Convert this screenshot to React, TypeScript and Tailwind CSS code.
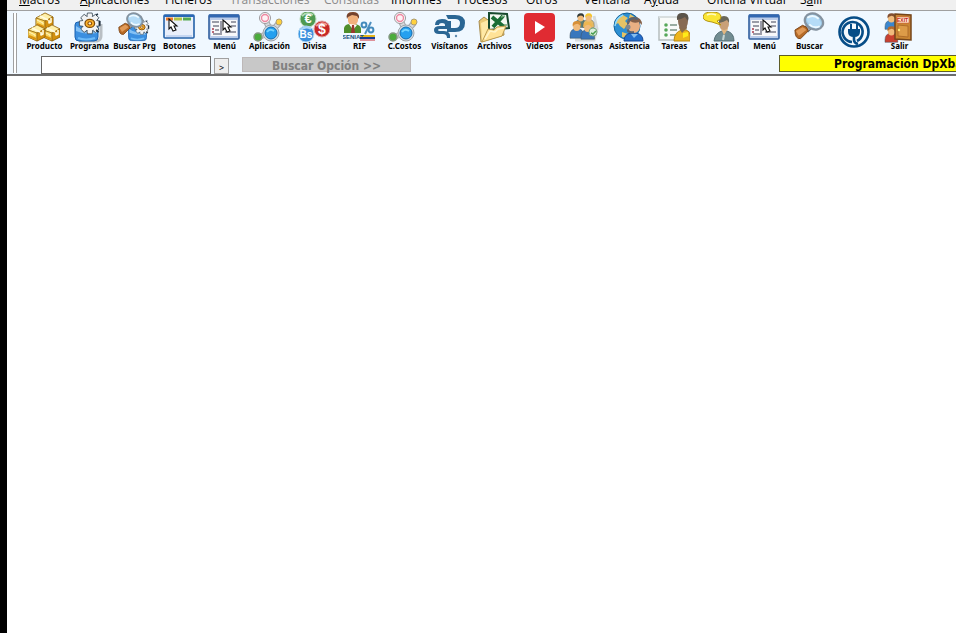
import type { ReactNode } from 'react';

type MenuItem = { label: string; hotkey?: number; width: string; disabled?: boolean };

const menuItems: MenuItem[] = [
  { label: 'Macros', hotkey: 0, width: 'w-[61px]' },
  { label: 'Aplicaciones', hotkey: 0, width: 'w-[85px]' },
  { label: 'Ficheros', width: 'w-[65px]' },
  { label: 'Transacciones', width: 'w-[94px]', disabled: true },
  { label: 'Consultas', width: 'w-[67px]', disabled: true },
  { label: 'Informes', width: 'w-[66px]' },
  { label: 'Procesos', width: 'w-[69px]' },
  { label: 'Otros', width: 'w-[58px]' },
  { label: 'Ventana', width: 'w-[60px]' },
  { label: 'Ayuda', hotkey: 1, width: 'w-[63px]' },
  { label: 'Oficina Virtual', width: 'w-[93px]' },
  { label: 'Salir', hotkey: 1, width: 'w-[40px]' },
];

function Icon({ children }: { children: ReactNode }) {
  return (
    <svg className="mr-px h-8 w-8 shrink-0" viewBox="0 0 32 32" fill="none" aria-hidden="true">
      {children}
    </svg>
  );
}

function Box({ x, y }: { x: number; y: number }) {
  return (
    <g transform={`translate(${x} ${y})`} stroke="#8a5a08" strokeWidth=".6" strokeLinejoin="round">
      <path d="M0 5 9 0l8 4v8l-8 4-9-4Z" fill="#e7ae2e" />
      <path d="m0 5 9-5 8 4-8 4Z" fill="#fff0a8" />
      <path d="M0 5v7l9 4V8Z" fill="#f8d560" />
      <path d="M9 8v8l8-4V4Z" fill="#d3900f" />
      <path d="m4 3 8 4M13 7v3l2-1V5" stroke="#fffbe0" strokeWidth="1.6" />
      <path d="m1 11 7 3" stroke="#dc930e" strokeWidth="2" />
      <path d="m1 7 6 3v1" stroke="#fff6c6" strokeWidth="1" />
    </g>
  );
}

function ProductIcon() {
  return (
    <Icon>
      <Box x={8} y={1} />
      <Box x={15} y={13} />
      <Box x={0} y={13} />
    </Icon>
  );
}

const gearTeeth = [0, 45, 90, 135, 180, 225, 270, 315];

function Gear() {
  return (
    <g>
      <g fill="#f1f3f5" stroke="#33424f" strokeWidth="1">
        {gearTeeth.map((angle) => (
          <path d="m12 7 1-7h6l1 7Z" transform={`rotate(${angle} 16 13)`} key={angle} />
        ))}
      </g>
      <circle cx="16" cy="13" r="9" fill="#f1f3f5" />
      <path d="m24 3 2-2M28 10v6M24 21l3 3" stroke="#1c2c3a" strokeWidth="2" />
      <ellipse cx="16" cy="13" rx="6" ry="5" fill="#ffb32b" stroke="#7e4c0b" strokeWidth="1.6" />
      <ellipse cx="16" cy="13" rx="2.4" ry="2" fill="#fff4d2" stroke="#8c4d04" strokeWidth="1.4" />
    </g>
  );
}

function BlueBin() {
  return (
    <g>
      <path d="M2 13q0-3 3-3h17q3 0 3 3v12q0 4-4 4H6q-4 0-4-4Z" fill="#3b8fe0" stroke="#1a62b0" />
      <path d="M3 14q10 7 21 4v3Q12 23 3 19Z" fill="#84c1f5" />
      <path d="M5 26q8 3 17 0" stroke="#6cbaf8" strokeWidth="2" />
    </g>
  );
}

function ProgramIcon() {
  return (
    <Icon>
      <path d="M6 29h18q4-1 4-5V12" stroke="#b9bfc4" strokeWidth="3" />
      <BlueBin />
      <g transform="translate(4 1) scale(.8)"><Gear /></g>
    </Icon>
  );
}

function Magnifier() {
  return (
    <g>
      <path d="m13 14 5 4-3 3-5-4Z" fill="#9a9fa4" stroke="#525c65" />
      <path d="m1 19 8-5q5 1 6 6l-8 8q-6 1-6-9Z" fill="#b66b27" stroke="#7c4518" />
      <path d="m2 20 7-4q3 1 4 3l-8 6Z" fill="#e09a58" />
      <ellipse cx="21" cy="10" rx="10" ry="8" transform="rotate(27 21 10)" fill="#9fcbe9" stroke="#8593a0" strokeWidth="2.4" />
      <ellipse cx="21" cy="10" rx="8" ry="5" transform="rotate(27 21 10)" fill="#b5dcf7" />
      <path d="M14 6q6-4 12 1M16 13q5 5 11 2" stroke="#edf9ff" strokeWidth="2" />
    </g>
  );
}

function SearchProgramIcon() {
  return (
    <Icon>
      <g transform="translate(9 6) scale(.78)"><BlueBin /></g>
      <g transform="translate(15 8) scale(.55)"><Gear /></g>
      <g transform="scale(.8)"><Magnifier /></g>
    </Icon>
  );
}

function SearchIcon() {
  return <Icon><g transform="translate(1 0) scale(.95)"><Magnifier /></g></Icon>;
}

function Cursor({ x, y }: { x: number; y: number }) {
  return (
    <path transform={`translate(${x} ${y})`} d="M0 0v10l2-2 2 4 3-1-2-4h3Z" fill="#fff" stroke="#111" strokeWidth="1.1" />
  );
}

function ButtonsIcon() {
  return (
    <Icon>
      <rect x="1" y="3" width="30" height="23" rx="1" fill="#e9effb" stroke="#2461a9" strokeWidth="1.6" />
      <path d="M1 4h30" stroke="#2867b6" strokeWidth="2" />
      <path d="M3 7h7" stroke="#ec7724" strokeWidth="3" />
      <path d="M11 7h8" stroke="#b2c344" strokeWidth="3" />
      <path d="M20 7h8" stroke="#55a94e" strokeWidth="3" />
      <path d="M3 24h26" stroke="#c5d6f2" strokeWidth="2" />
      <Cursor x={6} y={7} />
    </Icon>
  );
}

function MenuIcon() {
  return (
    <Icon>
      <rect x="1" y="3" width="30" height="24" rx="1" fill="#bccdea" stroke="#315f9f" strokeWidth="1.6" />
      <path d="M1 4h30" stroke="#3167b1" strokeWidth="3" />
      <path d="M3 8h26v16H3Z" fill="#f8f8fa" />
      <path d="M4 10h7M5 14h6M7 18h4M5 22h8M13 9v14M15 10h3M17 20h11M23 10h5M23 14h5M15 16h3" stroke="#9b9ca8" strokeWidth="2" />
      <path d="M4 17h2M4 20h2" stroke="#bc6877" strokeWidth="2" />
      <Cursor x={15} y={8} />
    </Icon>
  );
}

function MoleculeIcon() {
  return (
    <Icon>
      <path d="m12 7 6 13 8-9M18 21 5 25" stroke="#a5a8ac" strokeWidth="6" />
      <path d="m12 7 6 13 8-9M18 21 5 25" stroke="#d5d8dc" strokeWidth="4" />
      <circle cx="12" cy="6" r="5.5" fill="#fff" stroke="#9b989b" />
      <circle cx="12" cy="6" r="3.5" fill="#fff1f4" stroke="#ed89a2" strokeWidth="1.4" />
      <circle cx="26" cy="10" r="3" fill="#ffd13d" stroke="#ac9d74" />
      <circle cx="5" cy="25" r="4" fill="#4aac3c" stroke="#82977f" strokeWidth="1.5" />
      <circle cx="18" cy="21" r="8" fill="#d4dce3" stroke="#9fa6ab" />
      <circle cx="18" cy="21" r="6" fill="#25a0ef" stroke="#146fb1" />
      <path d="M14 20q3-4 7-1" stroke="#74d4ff" strokeWidth="2" />
    </Icon>
  );
}

function CurrencyIcon() {
  return (
    <Icon>
      <circle cx="10" cy="7" r="8" fill="#4e9a51" stroke="#bddbbe" />
      <path d="M4 4q5-5 11-1" stroke="#b4d9b6" strokeWidth="2" />
      <circle cx="8" cy="22" r="8" fill="#3c90dd" stroke="#b7d9f1" />
      <path d="M2 19q5-6 11-2" stroke="#a9d4f6" strokeWidth="2" />
      <circle cx="24" cy="17" r="8" fill="#c62827" stroke="#e3aaa9" />
      <path d="M18 14q6-5 11-1" stroke="#ee9a94" strokeWidth="2" />
      <g fill="#fff" fontFamily="Liberation Sans" fontWeight="700" textAnchor="middle">
        <text x="10" y="11" fontSize="13">€</text>
        <text x="8" y="26" fontSize="10">Bs</text>
        <text x="24" y="22" fontSize="14">$</text>
      </g>
    </Icon>
  );
}

function RifIcon() {
  return (
    <Icon>
      <path d="M1 21v-5q1-4 6-4h5q6 1 6 5v4Z" fill="#4e8e2b" />
      <path d="M5 3q-1-3 5-3 5 0 5 4v5q-2 5-5 5-4 0-5-5Z" fill="#f1b17c" />
      <path d="M4 7Q2 0 10 0q7 0 6 7l-2-3-5-1-4 2Z" fill="#75432e" />
      <path d="m6 12 4 6 4-5" fill="#fff" />
      <path d="m9 13-1 8h4l-1-8Z" fill="#9d372d" />
      <path d="m28 10-6 12" stroke="#4d8fc0" strokeWidth="2" />
      <circle cx="21" cy="13" r="2.4" stroke="#438abc" strokeWidth="2" />
      <circle cx="28" cy="18" r="2.4" stroke="#438abc" strokeWidth="2" />
      <path d="M17 24h15" stroke="#e3b51b" strokeWidth="2" />
      <path d="M17 26h15" stroke="#193d94" strokeWidth="2" />
      <path d="M17 28h15" stroke="#cc2d36" strokeWidth="1" />
      <text x="-1" y="27" fontFamily="Liberation Sans" fontWeight="700" fontSize="6" fill="#174f7a">SENIAT</text>
    </Icon>
  );
}

function LogoIcon() {
  return (
    <Icon>
      <path d="M13 3h9q10 0 10 8 0 9-10 9h-8V9h4v7h4q5 0 5-5 0-4-5-4h-7Z" fill="#2a6694" />
      <path d="M2 13q0-6 7-6 7 0 7 5v3h-4v-2q0-2-3-2-3 0-3 2Z" fill="#2a6694" />
      <path d="M15 14H7q-6 0-6 4t5 4h4q4 0 4 4h3q1-7-6-7H7q-2 0-2-1t2-1h8Z" fill="#2a6694" />
      <circle cx="23" cy="24" r="1.2" fill="#5d8bb0" />
    </Icon>
  );
}

function ArchiveIcon() {
  return (
    <Icon>
      <path d="M1 9 6 5l4 3 14-3 2 18L3 30Z" fill="#ecca76" stroke="#a88d50" />
      <path d="m3 11 7-3v18l-6 3Z" fill="#ffe9a6" />
      <path d="m11 1 18 1 2 14-20 2Z" fill="#f4f8f1" stroke="#17492d" strokeWidth="2" />
      <path d="m14 5 12 10M25 4 15 15" stroke="#1a6d35" strokeWidth="4" />
      <path d="m23 5 4-1M26 13h3" stroke="#70a879" strokeWidth="1.5" />
      <path d="m4 30 6-13 6 1 3-3 9-1-4 10Z" fill="#ffe297" stroke="#bd9c52" />
      <path d="m7 27 5-8 5 1 3-3 6-1" stroke="#fff5cc" strokeWidth="1.5" />
    </Icon>
  );
}

function VideoIcon() {
  return (
    <Icon>
      <rect x="1" y="1" width="31" height="29" rx="4" fill="#e02b32" />
      <path d="m12 9 10 6-10 7Z" fill="#fff" />
    </Icon>
  );
}

function Person({ x, y, hair, shirt }: { x: number; y: number; hair: string; shirt: string }) {
  return (
    <g transform={`translate(${x} ${y})`}>
      <path d="M0 15q0-7 7-8 8 0 8 8v3H0Z" fill={shirt} stroke="#425360" strokeWidth=".6" />
      <ellipse cx="7.5" cy="5" rx="4" ry="5" fill="#f0bb7c" />
      <path d="M3 5q-1-6 5-6 5 0 4 6-2-3-4-3-3 0-5 3Z" fill={hair} />
    </g>
  );
}

function PeopleIcon() {
  return (
    <Icon>
      <path d="M7 28h19l3-11-3-13" stroke="#d5dadd" strokeWidth="3" />
      <g transform="translate(7 2) scale(.75)"><Person x={0} y={0} hair="#323a38" shirt="#607f72" /></g>
      <g transform="translate(15 2) scale(.75)"><Person x={0} y={0} hair="#f4c52e" shirt="#e4ba65" /></g>
      <g transform="translate(2 10) scale(.9)"><Person x={0} y={0} hair="#d79038" shirt="#3877bd" /></g>
      <g transform="translate(13 11) scale(.9)"><Person x={0} y={0} hair="#efb650" shirt="#3973b8" /></g>
      <circle cx="25" cy="20" r="4" fill="#dceede" stroke="#7aaa7d" />
      <path d="m23 21 2 1 3-3" stroke="#4b9e50" strokeWidth="1.5" />
    </Icon>
  );
}

function AssistIcon() {
  return (
    <Icon>
      <circle cx="14" cy="14" r="13" fill="#2c8fd3" stroke="#126199" />
      <path d="m4 7 6-4 5 3-3 3 3 3-4 5-4-3-2-3-3 2Zm5 13 6 2-2 4-4-1ZM17 2l6 4-3 3-4-3Z" fill="#e4c366" />
      <path d="M2 14q1-8 8-11" stroke="#8bd9ff" strokeWidth="1.5" />
      <path d="M11 29q0-7 7-8h5q7 1 7 8Z" fill="#236ecb" stroke="#164895" />
      <ellipse cx="21" cy="14" rx="6" ry="7" fill="#e9b083" />
      <path d="M14 14q-1-9 7-9t8 8l-3-3q-5 2-9-1Z" fill="#846049" />
      <path d="M15 14v5q2 2 6 1M15 12q1-8 10-5" stroke="#5b6571" strokeWidth="2" />
      <circle cx="15" cy="15" r="2.5" fill="#7d8790" />
      <path d="m18 22 3 4 4-4" fill="#84bdee" />
    </Icon>
  );
}

function TasksIcon() {
  return (
    <Icon>
      <path d="M1 5h27v23H1Z" fill="#f8faf9" stroke="#b5bdbf" strokeWidth="1.5" />
      <path d="M1 5h27" stroke="#d8dedf" strokeWidth="2" />
      <path d="M12 13h7M12 18h7M12 23h6" stroke="#799284" strokeWidth="1.5" />
      <g fill="#57a859"><circle cx="8" cy="13" r="1.8" /><circle cx="8" cy="18" r="1.8" /><circle cx="8" cy="23" r="1.8" /></g>
      <path d="M16 29q0-9 8-11h4q4 1 4 5v6Z" fill="#edb51c" stroke="#b98815" />
      <path d="m21 16 3 5 5-5-1-3h-6Z" fill="#8a6c4a" />
      <ellipse cx="25" cy="9" rx="5" ry="8" fill="#876a53" />
      <path d="M19 8q-1-8 6-7 7 0 5 8l-3-4q-3 2-8 3Z" fill="#5a534a" />
      <path d="m25 21 5-1v4l-5 2Z" fill="#ffec18" />
    </Icon>
  );
}

function ChatIcon() {
  return (
    <Icon>
      <path d="M11 29q1-8 8-10h5q7 2 7 10Z" fill="#728d92" stroke="#566f75" />
      <path d="m18 17 3 6 4-6-2-4h-4Z" fill="#e2b780" />
      <ellipse cx="21" cy="12" rx="5" ry="6" fill="#c9a078" />
      <path d="M16 11q-1-7 5-7 6 0 5 7l-2-3q-3 2-8 3Z" fill="#69675a" />
      <path d="M9 10Q0 9 0 5q0-5 9-5 9 0 9 5 0 3-4 4l4 4Z" fill="#fae534" stroke="#b39412" />
      <path d="M4 3q4-2 9 0" stroke="#fffbc2" strokeWidth="1.5" />
      <path d="m21 23-1 5" stroke="#c6d6d4" strokeWidth="2" />
    </Icon>
  );
}

function PlugIcon() {
  return (
    <Icon>
      <circle cx="16" cy="16" r="14.5" fill="#f5fafe" stroke="#064d87" strokeWidth="2.6" />
      <path d="M14 26a10 10 0 1 1 5-1" stroke="#064d87" strokeWidth="2.6" />
      <path d="M13 8v6M19 8v6" stroke="#064d87" strokeWidth="2" />
      <path d="M10 13h12v3q0 5-6 5t-6-5Z" fill="#064d87" />
      <path d="M16 20v4q0 3 4 4" stroke="#064d87" strokeWidth="2.6" />
    </Icon>
  );
}

function ExitIcon() {
  return (
    <Icon>
      <g transform="translate(2 2) scale(.85)"><Person x={0} y={0} hair="#835031" shirt="#3a86cf" /></g>
      <g transform="translate(2 15) scale(.85)"><Person x={0} y={0} hair="#b46a2d" shirt="#c94130" /></g>
      <path d="m12 2 16 1v25l-16-1Z" fill="#c98532" stroke="#75451b" strokeWidth="1.5" />
      <path d="m15 13 10 1v11l-10-1Z" fill="#dc9b48" stroke="#b06d2a" />
      <path d="M14 5h12v6H14Z" fill="#fff0cf" stroke="#cd513b" strokeWidth=".6" />
      <text x="14" y="10" fontSize="5" fontFamily="Liberation Sans" fontWeight="700" fill="#c32222">EXIT</text>
      <circle cx="16" cy="18" r="1.2" fill="#ffe878" />
    </Icon>
  );
}

const tools = [
  { label: 'Producto', Icon: ProductIcon },
  { label: 'Programa', Icon: ProgramIcon },
  { label: 'Buscar Prg', Icon: SearchProgramIcon },
  { label: 'Botones', Icon: ButtonsIcon },
  { label: 'Menú', Icon: MenuIcon },
  { label: 'Aplicación', Icon: MoleculeIcon },
  { label: 'Divisa', Icon: CurrencyIcon },
  { label: 'RIF', Icon: RifIcon },
  { label: 'C.Costos', Icon: MoleculeIcon },
  { label: 'Visítanos', Icon: LogoIcon },
  { label: 'Archivos', Icon: ArchiveIcon },
  { label: 'Videos', Icon: VideoIcon },
  { label: 'Personas', Icon: PeopleIcon },
  { label: 'Asistencia', Icon: AssistIcon },
  { label: 'Tareas', Icon: TasksIcon },
  { label: 'Chat local', Icon: ChatIcon },
  { label: 'Menú', Icon: MenuIcon },
  { label: 'Buscar', Icon: SearchIcon },
  { label: '', Icon: PlugIcon },
  { label: 'Salir', Icon: ExitIcon },
];

function MenuLabel({ label, hotkey }: { label: string; hotkey?: number }) {
  if (hotkey === undefined) return <>{label}</>;
  return (
    <>
      {label.slice(0, hotkey)}
      <span className="underline">{label[hotkey]}</span>
      {label.slice(hotkey + 1)}
    </>
  );
}

function MenuBar() {
  return (
    <nav className="flex h-[11px] items-end overflow-hidden border-b border-[#a0a0a0] bg-[#f0f0f0] pl-3">
      {menuItems.map(({ label, hotkey, width, disabled }) => (
        <button
          className={`${width} shrink-0 text-left font-['Open_Sans','Noto_Sans',sans-serif] text-[12px] leading-5 whitespace-nowrap text-black disabled:text-[#8a8a8a]`}
          disabled={disabled}
          key={label}
          type="button"
        >
          <MenuLabel label={label} hotkey={hotkey} />
        </button>
      ))}
    </nav>
  );
}

function Toolbar() {
  return (
    <div className="flex h-[65px] border-b-2 border-[#6c6c6c] bg-[#f0f8ff] pl-[6px]">
      <div className="mt-[2px] h-[60px] w-1 shrink-0 border-x border-[#a0a0a0] bg-white" />
      <div className="min-w-0 grow pl-[5px]">
        <div className="flex h-11 pt-px">
          {tools.map(({ label, Icon: ToolIcon }, index) => (
            <button
              aria-label={label || 'Conectar'}
              className={`flex w-[45px] shrink-0 flex-col items-center ${label ? '' : 'pt-1'}`}
              key={index}
              type="button"
            >
              <ToolIcon />
              {label && (
                <span className="-mt-[3px] font-['Noto_Sans',sans-serif] text-[8px] leading-[10px] font-bold whitespace-nowrap text-black">
                  {label}
                </span>
              )}
            </button>
          ))}
        </div>
        <div className="flex items-start pl-[19px]">
          <input
            aria-label="Opción"
            className="mt-px h-[18px] w-[170px] shrink-0 border border-[#646464] bg-white px-1 font-['Noto_Sans',sans-serif] text-[12px] outline-none"
            type="text"
          />
          <button
            className="mt-[3px] ml-[3px] h-4 w-[15px] shrink-0 border border-[#a0a0a0] bg-[#eee] font-['Noto_Sans',sans-serif] text-[9px] leading-[18px]"
            type="button"
          >
            &gt;
          </button>
          <button
            className="mt-[2px] ml-[13px] h-[15px] w-[169px] shrink-0 border border-[#bdb8b8] bg-[#c8c8c8] font-['DejaVu_Sans_Condensed','DejaVu_Sans',sans-serif] text-[12px] leading-4 font-bold text-[#808080]"
            type="button"
          >
            Buscar Opción &gt;&gt;
          </button>
          <div className="ml-auto h-[17px] w-[177px] shrink-0 overflow-hidden border border-r-0 border-[#5d5d28] bg-[#ff0] pl-[54px] font-['DejaVu_Sans_Condensed','DejaVu_Sans',sans-serif] text-[12px] leading-4 font-bold whitespace-nowrap text-black">
            Programación DpXbase
          </div>
        </div>
      </div>
    </div>
  );
}

export default function App() {
  return (
    <div className="min-h-screen border-l-[7px] border-black bg-white">
      <header className="overflow-hidden">
        <MenuBar />
        <Toolbar />
      </header>
      <main />
    </div>
  );
}
